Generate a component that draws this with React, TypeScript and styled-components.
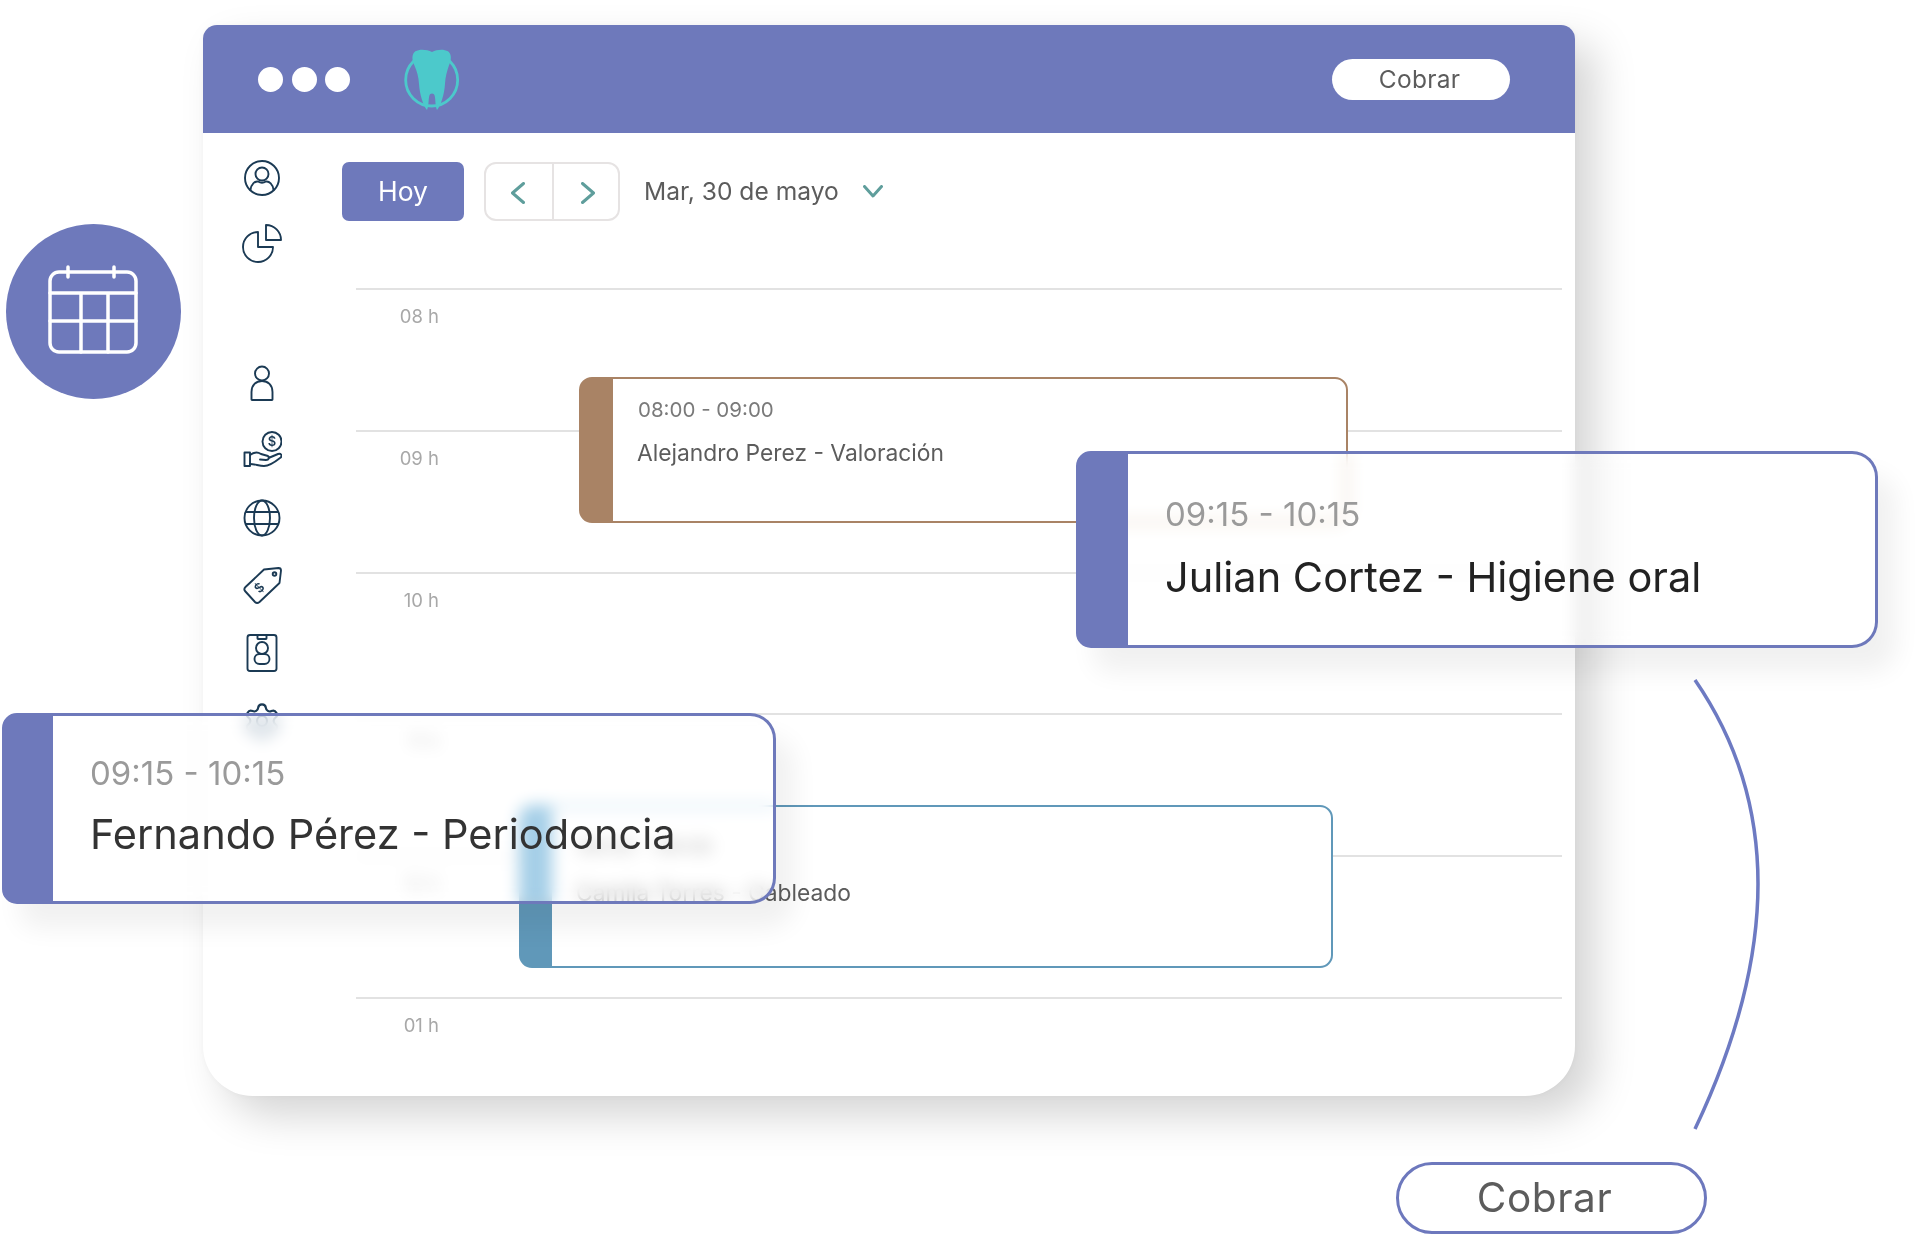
import React from "react";
import styled, { createGlobalStyle } from "styled-components";
import { Settings } from "lucide-react";

const INDIGO = "#6e79bb";
const INK = "#1b3a54";
const TEAL = "#5f9e9c";

const Global = createGlobalStyle`
  html, body { margin: 0; padding: 0; background: #fff; }
  body { font-family: Inter, "Liberation Sans", sans-serif; }
`;

const Page = styled.div`
  position: relative;
  width: 1920px;
  height: 1235px;
  overflow: hidden;
  background: #fff;
`;

const Window = styled.div`
  margin: 25px 0 0 203px;
  width: 1372px;
  height: 1071px;
  background: #fff;
  border-radius: 14px 14px 50px 50px;
  box-shadow: 20px 20px 42px rgba(0, 0, 0, 0.17), 0 0 6px rgba(0, 0, 0, 0.03);
  overflow: hidden;
  display: flex;
  flex-direction: column;
`;

const Header = styled.header`
  height: 108px;
  flex: none;
  background: ${INDIGO};
  display: flex;
  align-items: center;
  padding: 0 65px 0 55px;
`;

const Dots = styled.div`
  display: flex;
  gap: 8.5px;
`;

const Dot = styled.span`
  width: 25px;
  height: 25px;
  border-radius: 50%;
  background: #fff;
`;

const Logo = styled.svg`
  width: 64px;
  height: 70px;
  margin-left: 50px;
`;

const PillButton = styled.button`
  margin-left: auto;
  width: 178px;
  height: 41px;
  border: 0;
  border-radius: 21px;
  background: #fff;
  color: #5c5c5c;
  font: 400 24.5px Inter, "Liberation Sans", sans-serif;
  letter-spacing: 0.3px;
  padding: 0 3px 0 0;
`;

const Body = styled.div`
  flex: 1;
  display: flex;
  min-height: 0;
`;

const Sidebar = styled.nav`
  width: 139px;
  flex: none;
  padding: 25px 0 0 39px;
  box-sizing: border-box;
  display: flex;
  flex-direction: column;
`;

const SideGroup = styled.div<{ $gap: number; $top?: number }>`
  display: flex;
  flex-direction: column;
  gap: ${(p) => p.$gap}px;
  margin-top: ${(p) => p.$top ?? 0}px;
`;

const Icon = styled.svg`
  display: block;
  width: 40px;
  height: 40px;
  fill: none;
  stroke: ${INK};
  stroke-width: 1.9;
  stroke-linecap: round;
  stroke-linejoin: round;
  flex: none;
`;

const IconLabel = styled.text`
  fill: ${INK};
  stroke: none;
  font: 600 13px Inter, "Liberation Sans", sans-serif;
  text-anchor: middle;
`;

const Main = styled.main`
  flex: 1;
  padding-top: 29px;
  min-width: 0;
`;

const Toolbar = styled.div`
  display: flex;
  align-items: center;
  height: 59px;
  margin-bottom: 67px;
`;

const TodayButton = styled.button`
  width: 122px;
  height: 59px;
  border: 0;
  border-radius: 7px;
  background: ${INDIGO};
  color: #fff;
  font: 400 26.5px Inter, "Liberation Sans", sans-serif;
  padding: 0 0 2px;
`;

const Pager = styled.div`
  margin-left: 20px;
  width: 136px;
  height: 59px;
  box-sizing: border-box;
  border: 2px solid #e6e3e3;
  border-radius: 12px;
  display: grid;
  grid-template-columns: 1fr 1fr;
`;

const PagerCell = styled.div<{ $divided?: boolean }>`
  display: flex;
  align-items: center;
  justify-content: center;
  border-left: ${(p) => (p.$divided ? "2px solid #e6e3e3" : "0")};
  padding: ${(p) => (p.$divided ? "2px 0 0 3px" : "2px 2px 0 0")};
`;

const Chevron = styled.svg<{ $w: number; $h: number }>`
  width: ${(p) => p.$w}px;
  height: ${(p) => p.$h}px;
  fill: none;
  stroke: ${TEAL};
  stroke-width: 3;
  stroke-linecap: round;
  stroke-linejoin: round;
`;

const DateLabel = styled.span`
  margin: 0 0 2px 24px;
  color: #5c5c5c;
  font-size: 24.6px;
  white-space: nowrap;
`;

const DateCaret = styled.span`
  margin-left: 24px;
  display: flex;
`;

const Schedule = styled.div`
  position: relative;
  margin: 0 13px 0 14px;
`;

const HourRow = styled.div`
  height: 141.8px;
  box-sizing: border-box;
  border-top: 2px solid #e2e2e2;
  width: 100%;
  padding: 16px 0 0 0;
`;

const HourLabel = styled.div`
  width: 83px;
  text-align: right;
  color: #a8a8a8;
  font-size: 18.5px;
  line-height: 20px;
`;

const EventCard = styled.article<{ $x: number; $y: number; $w: number; $h: number; $color: string; $bar: number; $top: number }>`
  position: absolute;
  left: ${(p) => p.$x}px;
  top: ${(p) => p.$y}px;
  width: ${(p) => p.$w}px;
  height: ${(p) => p.$h}px;
  box-sizing: border-box;
  background: #fff;
  border: 2px solid ${(p) => p.$color};
  border-left-width: ${(p) => p.$bar}px;
  border-radius: 13px;
  padding: ${(p) => p.$top}px 0 0 24px;
`;

const EventTime = styled.div`
  margin-left: 1px;
  color: #7a7a7a;
  font-size: 20.5px;
  line-height: 22px;
`;

const EventName = styled.div<{ $gap: number }>`
  margin-top: ${(p) => p.$gap}px;
  color: #5c5c5c;
  font-size: 22.8px;
  line-height: 24px;
  white-space: nowrap;
`;

const FloatCard = styled.article<{ $x: number; $y: number; $w: number; $h: number; $pad: number; $bar: number }>`
  position: absolute;
  left: ${(p) => p.$x}px;
  top: ${(p) => p.$y}px;
  width: ${(p) => p.$w}px;
  height: ${(p) => p.$h}px;
  box-sizing: border-box;
  border: 3.5px solid ${INDIGO};
  border-left-width: ${(p) => p.$bar}px;
  border-radius: 15px 26px 26px 15px;
  background: rgba(255, 255, 255, 0.5);
  backdrop-filter: blur(8px) saturate(1.5);
  box-shadow: 18px 24px 26px rgba(0, 0, 0, 0.06);
  padding: ${(p) => p.$pad}px 0 0 37px;
`;

const FloatTime = styled.div`
  color: #9a9a9a;
  font-size: 33px;
  line-height: 40px;
`;

const FloatName = styled.div<{ $color: string; $gap: number }>`
  margin-top: ${(p) => p.$gap}px;
  color: ${(p) => p.$color};
  font-size: 41.5px;
  line-height: 46px;
  white-space: nowrap;
`;

const Round = styled.div`
  position: absolute;
  left: 6px;
  top: 224px;
  width: 175px;
  height: 175px;
  border-radius: 50%;
  background: ${INDIGO};
  display: flex;
  align-items: center;
  justify-content: center;
`;

const CalendarIcon = styled.svg`
  width: 96px;
  height: 96px;
  margin: 0 2px 2px 0;
  fill: none;
  stroke: #fff;
  stroke-width: 3.5;
  stroke-linecap: round;
  stroke-linejoin: round;
`;

const Arc = styled.svg`
  position: absolute;
  left: 1680px;
  top: 670px;
  width: 100px;
  height: 470px;
  fill: none;
  stroke: #6d7ac2;
  stroke-width: 3.5;
`;

const OutlineButton = styled.button`
  display: block;
  margin: 66px 0 0 1396px;
  width: 311px;
  height: 72px;
  box-sizing: border-box;
  border: 3px solid #6d78bd;
  border-radius: 36px;
  background: #fff;
  color: #5c5c5c;
  font: 400 40.5px Inter, "Liberation Sans", sans-serif;
  letter-spacing: 0.6px;
  padding: 0 14px 2px 0;
`;

const hours = ["08 h", "09 h", "10 h", "11 h", "12 h", "01 h"];

export default function App() {
  return (
    <Page>
      <Global />
      <Window>
        <Header>
          <Dots>
            <Dot />
            <Dot />
            <Dot />
          </Dots>
          <Logo viewBox="60 40 190 210" aria-hidden>
            <circle cx="154" cy="148" r="78" fill="none" stroke="#4cc9cb" strokeWidth="8.500" />
            <path
              fill="#4cc9cb"
              d="M155 64C140 56 118 54 105 62C94 70 94 88 102 104C110 122 115 140 116 160C118 190 128 225 140 238C146 225 144 205 147 195C149 186 161 186 163 195C166 205 164 225 170 238C182 225 192 190 194 160C195 140 200 122 206 104C214 88 214 70 203 62C190 54 170 56 155 64Z"
            />
          </Logo>
          <PillButton>Cobrar</PillButton>
        </Header>
        <Body>
          <Sidebar>
            <SideGroup $gap={25}>
              <Icon viewBox="0 0 40 40">
                <circle cx="20" cy="20" r="17" />
                <circle cx="20" cy="16" r="6.500" />
                <path d="M8.500 32C9 26 13 23 16 23.500C18.500 25 21.500 25 24 23.500C27 23 31 26 31.500 32" />
              </Icon>
              <Icon viewBox="0 0 40 40">
                <path d="M16 9V24H31A15 15 0 1 1 16 9Z" />
                <path d="M24 2A15 15 0 0 1 39 17H24Z" />
              </Icon>
            </SideGroup>
            <SideGroup $gap={27.6} $top={100}>
              <Icon viewBox="0 0 40 40">
                <circle cx="20" cy="10.500" r="7" />
                <path d="M9.500 36.500V29C9.500 22 14 18 20 18S30.500 22 30.500 29V36.500Q30.500 37 30 37H10Q9.500 37 9.500 36.500Z" />
              </Icon>
              <Icon viewBox="0 0 40 40">
                <circle cx="30" cy="10.500" r="9.500" />
                <IconLabel x="30" y="15.300">$</IconLabel>
                <path d="M2.500 21.500H8V35H2.500Z" />
                <path d="M8 24C12 21 16 21 19 23L26 25C28 26 27 29 24 29L18 28.500M26.500 27L36 23C39 22 41 25 38 27C33 31 28 35 22 35C17 35 13 33 8 33" />
              </Icon>
              <Icon viewBox="0 0 40 40">
                <circle cx="20" cy="20" r="17.500" />
                <ellipse cx="20" cy="20" rx="8" ry="17.500" />
                <path d="M4 14H36M4 26H36" />
              </Icon>
              <Icon viewBox="0 0 40 40">
                <path d="M22 3.500L36.500 2Q39 2 39 4.500L37.500 17L17.500 36Q15 38 13 36L3 25Q1.500 23 3.500 21Z" />
                <circle cx="32.500" cy="8" r="1.800" />
                <IconLabel x="0" y="0" transform="translate(20.500 25) rotate(-45)">$</IconLabel>
              </Icon>
              <Icon viewBox="0 0 40 40">
                <rect x="5.500" y="2" width="29" height="36" rx="2.500" />
                <path d="M15.500 2.500V5.500Q15.500 6 16 6H24Q24.500 6 24.500 5.500V2.500" />
                <circle cx="20" cy="15" r="6" />
                <rect x="12.500" y="21" width="15" height="10" rx="5" />
              </Icon>
              <Settings size={40} color={INK} strokeWidth={1.3} />
            </SideGroup>
          </Sidebar>
          <Main>
            <Toolbar>
              <TodayButton>Hoy</TodayButton>
              <Pager>
                <PagerCell>
                  <Chevron $w={14} $h={22} viewBox="0 0 14 22">
                    <path d="M12.500 1.500L1.500 11L12.500 20.500" />
                  </Chevron>
                </PagerCell>
                <PagerCell $divided>
                  <Chevron $w={14} $h={22} viewBox="0 0 14 22">
                    <path d="M1.500 1.500L12.500 11L1.500 20.500" />
                  </Chevron>
                </PagerCell>
              </Pager>
              <DateLabel>Mar, 30 de mayo</DateLabel>
              <DateCaret>
                <Chevron $w={20} $h={13} viewBox="0 0 20 13">
                  <path d="M1.500 1.500L10 11L18.500 1.500" />
                </Chevron>
              </DateCaret>
            </Toolbar>
            <Schedule>
              {hours.map((h) => (
                <HourRow key={h}>
                  <HourLabel>{h}</HourLabel>
                </HourRow>
              ))}
              <EventCard $x={223} $y={89} $w={769} $h={146} $color="#a98365" $bar={34} $top={20}>
                <EventTime>08:00 - 09:00</EventTime>
                <EventName $gap={20}>Alejandro Perez - Valoración</EventName>
              </EventCard>
              <EventCard $x={163} $y={517} $w={814} $h={163} $color="#6098b9" $bar={33} $top={29}>
                <EventTime>08:00 - 09:00</EventTime>
                <EventName $gap={23}>Camila Torres - Cableado</EventName>
              </EventCard>
            </Schedule>
          </Main>
        </Body>
      </Window>
      <OutlineButton>Cobrar</OutlineButton>
      <Round>
        <CalendarIcon viewBox="0 0 96 96">
          <rect x="5" y="9" width="86" height="80" rx="9" />
          <path d="M5 30H91M5 58H91M36 30V89M63 30V89" />
          <path d="M23 4V14M69 4V14" />
        </CalendarIcon>
      </Round>
      <FloatCard $x={1076} $y={451} $w={802} $h={197} $pad={40} $bar={52}>
        <FloatTime>09:15 - 10:15</FloatTime>
        <FloatName $color="#222" $gap={20}>Julian Cortez - Higiene oral</FloatName>
      </FloatCard>
      <FloatCard $x={2} $y={713} $w={774} $h={191} $pad={37} $bar={51}>
        <FloatTime>09:15 - 10:15</FloatTime>
        <FloatName $color="#333" $gap={18}>Fernando Pérez - Periodoncia</FloatName>
      </FloatCard>
      <Arc viewBox="1680 670 100 470">
        <path d="M1695 680Q1821 863 1695 1129" />
      </Arc>
    </Page>
  );
}
